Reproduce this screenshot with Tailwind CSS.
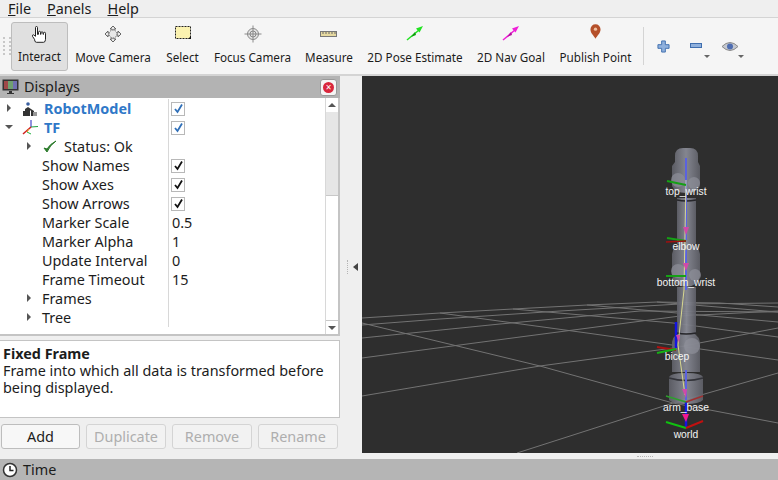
<!DOCTYPE html>
<html lang="en">

<head>
    <meta charset="UTF-8">
    <title>RViz</title>
    <script src="https://cdn.jsdelivr.net/npm/@tailwindcss/browser@4"></script>
</head>

<body class="w-[778px] h-[480px] overflow-hidden bg-[#efefef] text-[#1c1c1c] font-['Noto_Sans',sans-serif] text-[14.4px]">
    <!-- Menu bar -->
    <div class="h-[18px] flex items-center gap-[16px] pl-[8px] bg-[#efefef] border-b border-[#d4d4d4] leading-[14px]">
        <span><u>F</u>ile</span>
        <span><u>P</u>anels</span>
        <span><u>H</u>elp</span>
    </div>

    <!-- Tool bar -->
    <div class="h-[58px] flex items-center pl-[3px] bg-[#f5f5f5] border-b-2 border-[#d4d4d4] text-[11.7px] whitespace-nowrap">
        <div class="w-[8px] h-[18px] border-l-2 border-r-2 border-dotted border-[#c8c8c8]"></div>
        <div class="w-[57px] h-[49px] flex flex-col items-center justify-between pt-[2px] pb-[5px] bg-[#e0e0e0] border border-[#bdbdbd] rounded-[3px]">
            <svg width="20" height="20" viewBox="0 0 20 20" fill="#fff" stroke="#222" stroke-width="1" class="shrink-0">
                <path d="M5.500 2.500a1 1 0 0 1 2 0v7l1-.2v-2a1 1 0 0 1 2 0v2h.5v-1.500a1 1 0 0 1 2 0v1.500h.5v-1a1 1 0 0 1 2 0v6q0 3-2 3h-7q-2 0-2-3l-2-3q-.5-1.500 1-1.500l2 1.500z" />
            </svg>
            <span class="leading-[18px]">Interact</span>
        </div>
        <div class="w-[90px] h-[49px] flex flex-col items-center justify-between pt-[2px] pb-[5px]">
            <svg width="20" height="20" viewBox="0 0 20 20" fill="#e8e8e8" stroke="#666" stroke-width="1" class="shrink-0">
                <path d="M10 2l3 3h-2v2h-2v-2h-2zM10 18l3-3h-2v-2h-2v2h-2zM2 10l3-3v2h10v-2l3 3-3 3v-2h-10v2z" />
                <circle cx="10" cy="10" r="4" stroke-dasharray="1.500 1" />
            </svg>
            <span class="leading-[18px]">Move Camera</span>
        </div>
        <div class="w-[49px] h-[49px] flex flex-col items-center justify-between pt-[2px] pb-[5px]">
            <svg width="20" height="20" viewBox="0 0 20 20" class="shrink-0">
                <rect x="2.500" y="2.500" width="15" height="12" fill="#fbf2b0" stroke="#222" stroke-dasharray="2 1" />
                <path d="M15 15h3v-3z" fill="#111" />
            </svg>
            <span class="leading-[18px]">Select</span>
        </div>
        <div class="w-[91px] h-[49px] flex flex-col items-center justify-between pt-[2px] pb-[5px]">
            <svg width="20" height="20" viewBox="0 0 20 20" fill="none" stroke="#8a8a8a" stroke-width="1" class="shrink-0">
                <circle cx="10" cy="10" r="5.500" fill="#e4e4e4" />
                <path d="M10 1.500v17M1.500 10h17M7 10a3 3 0 0 1 6 0a3 3 0 0 1-6 0" />
            </svg>
            <span class="leading-[18px]">Focus Camera</span>
        </div>
        <div class="w-[62px] h-[49px] flex flex-col items-center justify-between pt-[2px] pb-[5px]">
            <svg width="20" height="20" viewBox="0 0 20 20" class="shrink-0">
                <rect x="1.500" y="7.500" width="16" height="5" fill="#e6d9a0" stroke="#777" />
                <path d="M4 8v2M7 8v2M10 8v2M13 8v2M16 8v2" stroke="#666" />
            </svg>
            <span class="leading-[18px]">Measure</span>
        </div>
        <div class="w-[110px] h-[49px] flex flex-col items-center justify-between pt-[2px] pb-[5px]">
            <svg width="18" height="16" viewBox="0 0 18 16" class="mt-[1px] shrink-0">
                <path d="M1 15l12-10" stroke="#22e322" stroke-width="1.500" />
                <path d="M17 1l-7 2.500 3.500 4z" fill="#22e322" />
                <path d="M5 12l4-5 1 3z" fill="#0c9c0c" />
            </svg>
            <span class="leading-[18px]">2D Pose Estimate</span>
        </div>
        <div class="w-[82px] h-[49px] flex flex-col items-center justify-between pt-[2px] pb-[5px]">
            <svg width="18" height="16" viewBox="0 0 18 16" class="mt-[1px] shrink-0">
                <path d="M1 15l12-10" stroke="#f01fd8" stroke-width="1.500" />
                <path d="M17 1l-7 2.500 3.500 4z" fill="#f01fd8" />
                <path d="M5 12l4-5 1 3z" fill="#b0109c" />
            </svg>
            <span class="leading-[18px]">2D Nav Goal</span>
        </div>
        <div class="w-[87px] h-[49px] flex flex-col items-center justify-between pt-[1px] pb-[5px]">
            <svg width="11" height="17" viewBox="0 0 12 17" class="shrink-0">
                <path d="M6 16.500c-2-4-5.500-6-5.500-10.500a5.500 5.500 0 0 1 11 0c0 4.500-3.500 6.500-5.500 10.500z" fill="#b5502a" />
                <circle cx="6" cy="6" r="1.800" fill="#f0c0a0" />
            </svg>
            <span class="leading-[18px]">Publish Point</span>
        </div>
        <div class="w-px h-[38px] ml-[4px] bg-[#d4d4d4]"></div>
        <svg width="13" height="13" viewBox="0 0 14 14" class="ml-[13px] shrink-0">
            <path d="M5 1h4v4h4v4h-4v4h-4v-4h-4v-4h4z" fill="#8fb0dc" stroke="#3f6eae" />
        </svg>
        <div class="ml-[20px] w-[20px] h-[14px] relative">
            <div class="w-[12px] h-[5px] mt-[4px] bg-[#8fb0dc] border border-[#3f6eae]"></div>
            <div class="absolute right-[0px] bottom-[-5px] border-l-[3px] border-r-[3px] border-t-[3px] border-l-transparent border-r-transparent border-t-[#666]"></div>
        </div>
        <div class="ml-[12px] w-[22px] h-[14px] relative">
            <svg width="16" height="11" viewBox="0 0 16 11" class="mt-[2px]">
                <path d="M0 5.500q8-8 16 0q-8 8-16 0z" fill="#c4c8d0" stroke="#8a8a8a" />
                <circle cx="8" cy="5.500" r="3" fill="#4f6db0" />
            </svg>
            <div class="absolute right-[0px] bottom-[-5px] border-l-[3px] border-r-[3px] border-t-[3px] border-l-transparent border-r-transparent border-t-[#666]"></div>
        </div>
    </div>

    <div class="flex h-[383px]">
        <!-- Displays panel -->
        <div class="w-[340px] shrink-0 flex flex-col">
            <div class="h-[22px] flex items-center justify-between pl-[2px] pr-[3px] bg-[#b3b3b3]">
                <div class="flex items-center gap-[5px]">
                    <svg width="17" height="16" viewBox="0 0 17 16">
                        <rect x="0.500" y="0.500" width="16" height="11" fill="#333" />
                        <rect x="2" y="2" width="4" height="8" fill="#a04848" />
                        <rect x="6" y="2" width="5" height="8" fill="#70a070" />
                        <rect x="11" y="2" width="4" height="8" fill="#7070b0" />
                        <path d="M5 14h7v1h-7zM7 12h3v2h-3z" fill="#333" />
                    </svg>
                    <span>Displays</span>
                </div>
                <div class="w-[17px] h-[17px] flex items-center justify-center bg-[#f5f5f5] border border-[#999] rounded-[3px]">
                    <div class="w-[11px] h-[11px] flex items-center justify-center rounded-full bg-[#d9263c] text-white text-[10px] leading-[11px]">×</div>
                </div>
            </div>

            <!-- Property tree -->
            <div class="h-[238px] flex bg-white border-b-2 border-r-2 border-[#c4c4c4]">
                <div id="tree" class="flex-1 pt-px"></div>
                <div class="w-[13px] flex flex-col items-center border-l border-[#d8d8d8] bg-white">
                    <div class="h-[14px] flex items-center"><div class="border-l-[4px] border-r-[4px] border-b-[4px] border-l-transparent border-r-transparent border-b-[#555]"></div></div>
                    <div class="w-full h-[84px] bg-[#e6e6e6] border-b border-[#c8c8c8]"></div>
                    <div class="flex-1"></div>
                    <div class="w-full h-[14px] flex items-center justify-center border-t border-[#c8c8c8]"><div class="border-l-[4px] border-r-[4px] border-t-[4px] border-l-transparent border-r-transparent border-t-[#555]"></div></div>
                </div>
            </div>

            <!-- Help text -->
            <div class="h-[78px] mt-[4px] px-[3px] pt-[4px] bg-white border border-[#c4c4c4] border-l-0 leading-[17px]">
                <b>Fixed Frame</b><br>Frame into which all data is transformed before being displayed.
            </div>

            <div class="flex gap-[6px] pl-px pt-[6px]">
                <div class="w-[79px] h-[25px] flex items-center justify-center bg-[#f7f7f7] border border-[#bdbdbd] rounded-[3px]">Add</div>
                <div class="w-[80px] h-[25px] flex items-center justify-center bg-[#f2f2f2] border border-[#d4d4d4] rounded-[3px] text-[#aeaeae]">Duplicate</div>
                <div class="w-[80px] h-[25px] flex items-center justify-center bg-[#f2f2f2] border border-[#d4d4d4] rounded-[3px] text-[#aeaeae]">Remove</div>
                <div class="w-[80px] h-[25px] flex items-center justify-center bg-[#f2f2f2] border border-[#d4d4d4] rounded-[3px] text-[#aeaeae]">Rename</div>
            </div>
        </div>

        <!-- Splitter with collapse arrow -->
        <div class="w-[22px] shrink-0 flex items-center justify-end gap-[5px] pr-[4px] pb-[2px]">
            <div class="h-[14px] border-l border-dotted border-[#b5b5b5]"></div>
            <div class="border-t-[4px] border-b-[4px] border-r-[5px] border-t-transparent border-b-transparent border-r-[#444]"></div>
        </div>

        <!-- 3D view, drawn in page coordinates minus its own offset -->
        <div class="flex-1 flex flex-col">
            <svg width="416" height="377" viewBox="362 76 416 377" class="bg-[#2e2e2e] block shrink-0 font-['Liberation_Sans',sans-serif]">
                <defs>
                    <linearGradient id="link">
                        <stop offset="0" stop-color="#5f6068" />
                        <stop offset="0.5" stop-color="#8b8d98" />
                        <stop offset="1" stop-color="#5f6068" />
                    </linearGradient>
                </defs>
                <g fill="none" stroke="#737373" stroke-width="1">
                    <path d="M362 318L440 313L513 309L587 305L657 302L720 303L778 307" />
                    <path d="M362 325L440 319L560 311L680 304L778 303" />
                    <path d="M362 338L500 324L640 311L778 312" />
                    <path d="M362 358L520 337L680 316L778 311" />
                    <path d="M362 396L540 366L673 348L778 328" />
                    <path d="M517 453L673 403L778 373" />
                    <path d="M362 323L540 366L673 403L778 423" />
                    <path d="M440 313L587 333L778 360" />
                    <path d="M513 309L673 323L778 337" />
                    <path d="M587 305L778 322" />
                    <path d="M657 302L778 312" />
                </g>
                <!-- arm links -->
                <g fill="url(#link)" fill-opacity="0.92">
                    <path d="M677 198h19v46h-19zM677 287h19v46h-19z" />
                    <path d="M675 156q0-8 8-8h7q8 0 8 8v6l2 4v20q-3 7-14 7t-14-7v-20l3-4z" />
                    <path d="M672 254q2-10 14-11q12 1 14 11v22q-3 11-14 11t-14-11z" />
                    <path d="M672 342q2-10 14-10q12 0 14 10v30h-28z" />
                    <path d="M669 378q0-5 17-5t17 5v22q-4 4-17 4t-17-4z" />
                </g>
                <path d="M669 378q17 5 34 0" fill="none" stroke="#33343a" stroke-width="1.500" />
                <path d="M677 200q9 2 19 0M677 333q9 2 19 0" fill="none" stroke="#26262a" stroke-width="1.500" />
                <g fill="#8e909a" fill-opacity="0.7">
                    <circle cx="678" cy="180" r="7" />
                    <circle cx="694" cy="183" r="6" />
                    <circle cx="678" cy="271" r="7" />
                    <circle cx="695" cy="275" r="6" />
                    <circle cx="692" cy="346" r="8" />
                </g>
                <!-- TF frames -->
                <g fill="none" stroke-width="2">
                    <path d="M686 158V240M686 250V290" stroke="#5a62e0" />
                    <path d="M686 370V400" stroke="#5a62e0" />
                    <path d="M686 402V428" stroke="#1414e0" stroke-width="2.500" />
                    <path d="M676 322V348" stroke="#1414e0" stroke-width="2.500" />
                    <path d="M686 180L684 290L678 345L685 395" stroke="#d8d890" stroke-width="1" />
                    <path d="M667 181L686 185M667 238L686 241M666 276L686 276" stroke="#15a015" stroke-width="2" />
                    <path d="M666 242L686 241" stroke="#a01010" stroke-width="1.500" />
                    <path d="M657 347L676 350" stroke="#b01010" stroke-width="2" />
                    <path d="M657 353L676 349" stroke="#15b015" stroke-width="2" />
                    <path d="M666 396L686 402" stroke="#2ca02c" stroke-width="1.500" />
                    <path d="M703 396L686 402" stroke="#a03030" stroke-width="1.500" />
                    <path d="M666 422L686 428" stroke="#10c010" stroke-width="2" />
                    <path d="M703 421L686 428" stroke="#c01010" stroke-width="2" />
                </g>
                <g fill="#d14aa8">
                    <path d="M683 227h6l-3 8z" />
                    <path d="M683 263h6l-3 8z" />
                    <path d="M676 335h4l-1 8z" />
                    <path d="M682 389h5l-1 9z" />
                    <path d="M682 414h7l-3 8z" fill="#f01890" />
                </g>
                <g fill="#f4f4f4" font-size="10.300" text-anchor="middle">
                    <text x="686" y="195">top_wrist</text>
                    <text x="686" y="250">elbow</text>
                    <text x="686" y="286">bottom_wrist</text>
                    <text x="677" y="360">bicep</text>
                    <text x="686" y="411">arm_base</text>
                    <text x="686" y="438">world</text>
                </g>
            </svg>
            <div class="h-[6px] flex items-center justify-center pl-[150px]">
                <div class="w-[16px] border-t border-dotted border-[#b5b5b5]"></div>
            </div>
        </div>
    </div>

    <!-- Time panel -->
    <div class="h-[21px] flex items-center gap-[5px] pl-[2px] pt-px bg-[#b5b5b5]">
        <svg width="16" height="16" viewBox="0 0 16 16">
            <circle cx="8" cy="8" r="6.500" fill="#fff" stroke="#333" stroke-width="1.500" />
            <path d="M8 4v4.500h3.500" fill="none" stroke="#222" stroke-width="1.500" />
        </svg>
        <span>Time</span>
    </div>

    <script>
        // Tree rows of the Displays panel
        const rows = [
            { name: "RobotModel", arrow: "right", arrowX: 7, left: 22, icon: "robot", check: "blue", bold: true },
            { name: "TF", arrow: "down", arrowX: 5, left: 22, icon: "axes", check: "blue", bold: true },
            { name: "Status: Ok", arrow: "right", arrowX: 27, left: 43, icon: "ok" },
            { name: "Show Names", left: 42, check: "black" },
            { name: "Show Axes", left: 42, check: "black" },
            { name: "Show Arrows", left: 42, check: "black" },
            { name: "Marker Scale", left: 42, value: "0.5" },
            { name: "Marker Alpha", left: 42, value: "1" },
            { name: "Update Interval", left: 42, value: "0" },
            { name: "Frame Timeout", left: 42, value: "15" },
            { name: "Frames", arrow: "right", arrowX: 27, left: 42 },
            { name: "Tree", arrow: "right", arrowX: 27, left: 42 }
        ];

        const icons = {
            robot: `<svg width="16" height="16" viewBox="0 0 16 16" class="mr-[6px]"><circle cx="6" cy="3" r="1.800" fill="#3a5fa0"/><path d="M3 15V8l3-2 3 2 3 2v5h-3V10l-1-1v6zM1 15h2v-5H1z" fill="#333"/><path d="M11 11h4v4h-4z" fill="#999"/></svg>`,
            axes: `<svg width="16" height="16" viewBox="0 0 16 16" class="mr-[6px]"><path d="M9 7V0" stroke="#2020c0"/><path d="M9 7L16 6.500" stroke="#20a040"/><path d="M9 7L1 14" stroke="#d02020" stroke-width="1.500"/><path d="M5 12L9 14" stroke="#20b040"/><path d="M7 9L5 12" stroke="#e0a020"/></svg>`,
            ok: `<svg width="14" height="14" viewBox="0 0 14 14" class="mr-[7px]"><path d="M1 8l3 4q3-7 9-11q-6 3-9 8z" fill="#2a7a2a" stroke="#2a7a2a"/></svg>`
        };

        const box = (color) => `<span class="w-[14px] h-[14px] -ml-px flex items-center justify-center border border-[#b8b8b8] bg-white">
            <svg width="11" height="11" viewBox="0 0 11 11"><path d="M2 6l2.500 3L9 1.500" fill="none" stroke="${color === "blue" ? "#2f6fb8" : "#111"}" stroke-width="1.800"/></svg></span>`;

        function createRow(row) {
            const arrow = row.arrow === "right"
                ? `<span class="absolute top-[5px] border-t-[4px] border-b-[4px] border-l-[4px] border-t-transparent border-b-transparent border-l-[#555]" style="left:${row.arrowX}px"></span>`
                : row.arrow === "down"
                    ? `<span class="absolute top-[7px] border-l-[4px] border-r-[4px] border-t-[4px] border-l-transparent border-r-transparent border-t-[#555]" style="left:${row.arrowX}px"></span>`
                    : "";
            return `<div class="h-[19px] flex items-center">
                <div class="relative w-[169px] h-[19px] flex items-center border-r border-[#d8d8d8]" style="padding-left:${row.left}px">
                    ${arrow}
                    ${row.icon ? icons[row.icon] : ""}
                    <span class="${row.bold ? "font-bold text-[#2f78c8]" : ""}">${row.name}</span>
                </div>
                <div class="pl-[3px] flex items-center">${row.check ? box(row.check) : (row.value || "")}</div>
            </div>`;
        }

        document.getElementById("tree").innerHTML = rows.map(createRow).join("");
    </script>
</body>

</html>
